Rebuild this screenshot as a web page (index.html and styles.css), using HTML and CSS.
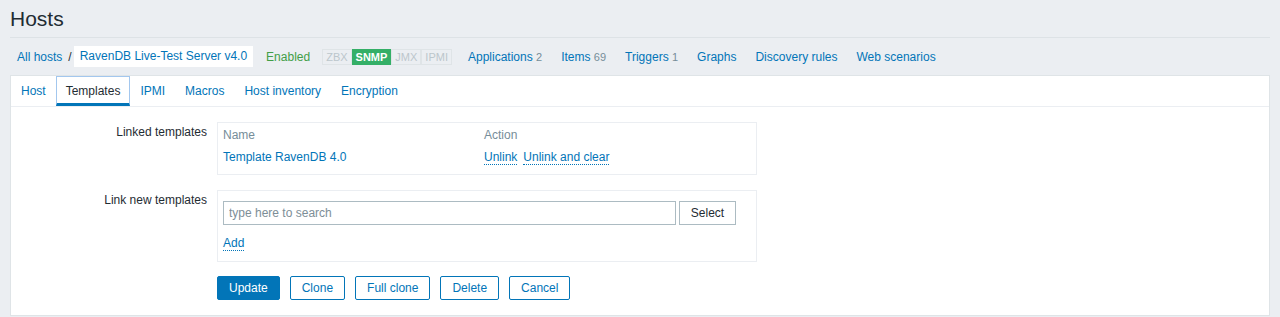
FILE: index.html
```html
<!DOCTYPE html>
<html lang="en">
<head>
<meta charset="utf-8">
<title>Hosts</title>
<link rel="stylesheet" href="styles.css">
</head>
<body>
<div class="wrapper">
  <header class="header">
    <h1 class="title">Hosts</h1>
  </header>
  <nav class="object-nav">
    <a class="link crumb" href="#">All hosts</a><span class="crumb-sep">/</span>
    <span class="host-name">RavenDB Live-Test Server v4.0</span>
    <span class="status-enabled">Enabled</span>
    <span class="status-container"><span class="st st-grey">ZBX</span><span class="st st-green">SNMP</span><span class="st st-grey">JMX</span><span class="st st-grey">IPMI</span></span>
    <a class="link nav-link first" href="#">Applications <span class="count">2</span></a>
    <a class="link nav-link" href="#">Items <span class="count">69</span></a>
    <a class="link nav-link" href="#">Triggers <span class="count">1</span></a>
    <a class="link nav-link" href="#">Graphs</a>
    <a class="link nav-link" href="#">Discovery rules</a>
    <a class="link nav-link" href="#">Web scenarios</a>
  </nav>
  <section class="panel">
    <ul class="tabs">
      <li><a class="tab" href="#">Host</a></li>
      <li><a class="tab tab-active" href="#">Templates</a></li>
      <li><a class="tab" href="#">IPMI</a></li>
      <li><a class="tab" href="#">Macros</a></li>
      <li><a class="tab" href="#">Host inventory</a></li>
      <li><a class="tab" href="#">Encryption</a></li>
    </ul>
    <div class="form">
      <div class="form-row">
        <div class="form-label">Linked templates</div>
        <div class="fieldset linked">
          <table class="linked-table">
            <tr class="head-row">
              <th class="col-name">Name</th>
              <th>Action</th>
            </tr>
            <tr class="body-row">
              <td><a class="link" href="#">Template RavenDB 4.0</a></td>
              <td><a class="link dotted" href="#">Unlink</a><a class="link dotted action-gap" href="#">Unlink and clear</a></td>
            </tr>
          </table>
        </div>
      </div>
      <div class="form-row row-new">
        <div class="form-label">Link new templates</div>
        <div class="fieldset new-templates">
          <div class="multiselect">
            <input class="search-input" type="text" placeholder="type here to search">
            <button class="btn-grey" type="button">Select</button>
          </div>
          <div class="add-row"><a class="link dotted" href="#">Add</a></div>
        </div>
      </div>
      <div class="form-row row-buttons">
        <div class="form-label"></div>
        <div class="buttons">
          <button class="btn btn-main" type="button">Update</button>
          <button class="btn btn-alt" type="button">Clone</button>
          <button class="btn btn-alt" type="button">Full clone</button>
          <button class="btn btn-alt" type="button">Delete</button>
          <button class="btn btn-alt" type="button">Cancel</button>
        </div>
      </div>
    </div>
  </section>
</div>
</body>
</html>
```
FILE: styles.css
```css
* { box-sizing: border-box; }

html, body {
  margin: 0;
  padding: 0;
}

body {
  background: #ebeef2;
  color: #1f2c33;
  font-family: "Liberation Sans", Arial, sans-serif;
  font-size: 12px;
  line-height: 14px;
}

.wrapper {
  padding: 0 10px;
}

.header {
  padding: 7px 0 6px;
  border-bottom: 1px solid #dde2e6;
}

.title {
  margin: 0;
  font-size: 21px;
  line-height: 24px;
  font-weight: normal;
  color: #1f2c33;
}

.link {
  color: #0275b8;
  text-decoration: none;
}

.object-nav {
  display: flex;
  align-items: center;
  height: 37px;
  padding-left: 7px;
  white-space: nowrap;
}

.crumb-sep {
  margin-left: 6px;
  color: #1f2c33;
}

.host-name {
  margin-left: 2px;
  background: #ffffff;
  padding: 0 6px;
  line-height: 21px;
  height: 21px;
  color: #0275b8;
}

.status-enabled {
  margin-left: 13px;
  color: #429e47;
}

.status-container {
  margin-left: 12px;
  display: flex;
}

.st {
  display: block;
  border: 1px solid #dfe4e7;
  padding: 0 3px;
  font-size: 11px;
  line-height: 14px;
  font-weight: normal;
}

.st-grey {
  color: #bcc6cc;
  background: #ebeef2;
}

.st-green {
  color: #ffffff;
  background: #34af67;
  border-color: #34af67;
  font-weight: bold;
}

.nav-link {
  margin-left: 19px;
}

.nav-link.first {
  margin-left: 16px;
}

.count {
  color: #768d99;
  font-size: 11px;
}

.panel {
  background: #ffffff;
  border: 1px solid #dfe4e7;
}

.tabs {
  display: flex;
  list-style: none;
  margin: 0;
  padding: 0;
  border-bottom: 1px solid #ebeef2;
}

.tab {
  display: block;
  padding: 7px 9px 5px;
  border: 1px solid transparent;
  border-bottom: 3px solid transparent;
  color: #0275b8;
  text-decoration: none;
  line-height: 14px;
}

.tab-active {
  color: #1f2c33;
  border-color: #a3c7ee;
  border-bottom-color: #0275b8;
}

.form {
  padding: 15px 0 15px;
}

.form-row {
  display: grid;
  grid-template-columns: 196px 540px;
  column-gap: 10px;
}

.row-new {
  margin-top: 15px;
}

.row-buttons {
  margin-top: 14px;
}

.form-label {
  text-align: right;
  padding-top: 3px;
  color: #1f2c33;
}

.fieldset {
  border: 1px solid #ebeef2;
}

.linked {
  padding: 5px 5px 4px;
}

.linked-table {
  border-collapse: collapse;
  border-spacing: 0;
}

.linked-table th,
.linked-table td {
  padding: 0;
  vertical-align: top;
  text-align: left;
  font-weight: normal;
}

.head-row th {
  height: 22px;
}

.body-row td {
  height: 20px;
}

.linked-table th {
  color: #768d99;
}

.col-name {
  width: 261px;
}

.dotted {
  border-bottom: 1px dotted #0275b8;
}

.action-gap {
  margin-left: 6px;
}

.new-templates {
  padding: 10px 5px 10px;
}

.multiselect {
  display: flex;
}

.search-input {
  width: 453px;
  height: 24px;
  border: 1px solid #acbbc2;
  padding: 0 5px;
  margin: 0;
  font-family: "Liberation Sans", Arial, sans-serif;
  font-size: 12px;
  color: #1f2c33;
  background: #ffffff;
  outline: none;
}

.search-input::placeholder {
  color: #7d8e97;
  opacity: 1;
}

.btn-grey {
  margin-left: 3px;
  width: 57px;
  height: 24px;
  border: 1px solid #acbbc2;
  background: #ffffff;
  color: #1f2c33;
  font-family: "Liberation Sans", Arial, sans-serif;
  font-size: 12px;
  padding: 0;
  border-radius: 0;
}

.add-row {
  margin-top: 11px;
  line-height: 15px;
}

.buttons {
  display: flex;
  gap: 10px;
}

.btn {
  height: 24px;
  padding: 0 11px;
  border: 1px solid #0275b8;
  font-family: "Liberation Sans", Arial, sans-serif;
  font-size: 12px;
  line-height: 22px;
  border-radius: 2px;
  margin: 0;
}

.btn-main {
  background: #0275b8;
  color: #ffffff;
}

.btn-alt {
  background: #ffffff;
  color: #0275b8;
}
```
